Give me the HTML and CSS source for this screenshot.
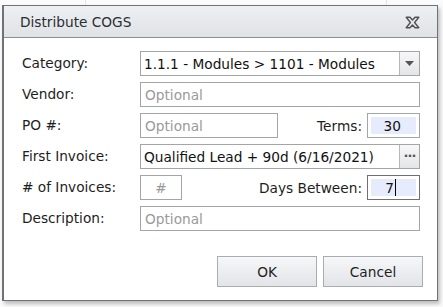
FILE: index.html
```html
<!DOCTYPE html>
<html>
<head>
<meta charset="utf-8">
<link rel="stylesheet" href="styles.css">
</head>
<body>
<div class="backdrop">
  <div class="dialog">
    <div class="header">
      <span class="title">Distribute COGS</span>
      <svg class="close" width="15" height="13" viewBox="0 0 15 13">
        <path d="M1.2 1.2 L5 1.2 L7.5 4 L10 1.2 L13.8 1.2 L9.6 6.5 L13.8 11.8 L10 11.8 L7.5 9 L5 11.8 L1.2 11.8 L5.4 6.5 Z" fill="#e4e6e8" stroke="#4f5256" stroke-width="1.4" stroke-linejoin="round"/>
      </svg>
    </div>
    <div class="body">
      <div class="form">
        <label class="lbl">Category:</label>
        <div class="field combo">
          <span class="combo-text">1.1.1 - Modules &gt; 1101 - Modules</span>
          <span class="combo-btn"><svg width="9" height="5" viewBox="0 0 9 5"><path d="M0 0 H9 L4.5 5 Z" fill="#555"/></svg></span>
        </div>

        <label class="lbl">Vendor:</label>
        <div class="field input"><span class="ph">Optional</span></div>

        <label class="lbl">PO #:</label>
        <div class="split">
          <div class="field input po"><span class="ph">Optional</span></div>
          <span class="sublbl">Terms:</span>
          <div class="field num"><span class="num-fill terms">30</span></div>
        </div>

        <label class="lbl">First Invoice:</label>
        <div class="field combo">
          <span class="combo-text">Qualified Lead + 90d (6/16/2021)</span>
          <span class="combo-btn dots">&middot;&middot;&middot;</span>
        </div>

        <label class="lbl"># of Invoices:</label>
        <div class="split">
          <div class="field input count"><span class="ph">#</span></div>
          <span class="sublbl">Days Between:</span>
          <div class="field num focus"><span class="num-fill days">7<span class="caret"></span></span></div>
        </div>

        <label class="lbl">Description:</label>
        <div class="field input"><span class="ph">Optional</span></div>
      </div>
      <div class="actions">
        <button class="btn">OK</button>
        <button class="btn">Cancel</button>
      </div>
    </div>
  </div>
</div>
</body>
</html>
```
FILE: styles.css
```css
html, body {
  margin: 0;
  padding: 0;
}
body {
  font-family: "DejaVu Sans", Verdana, sans-serif;
  font-size: 13.7px;
  color: #1e1e1e;
  background: #ffffff;
  width: 443px;
  height: 307px;
  overflow: hidden;
}
.backdrop {
  width: 443px;
  height: 307px;
  padding: 5px 0 0 2px;
  box-sizing: border-box;
  background:
    linear-gradient(#e6e6e6, #e6e6e6) 85px 0 / 1px 5px no-repeat,
    linear-gradient(#e6e6e6, #e6e6e6) 386px 0 / 1px 5px no-repeat,
    #fbfbfb;
}
.dialog {
  width: 436px;
  height: 296px;
  box-sizing: border-box;
  border: 1px solid #6f7377;
  border-left-width: 2px;
  background: #fff;
  box-shadow: 2px 3px 4px rgba(0,0,0,0.25);
  display: flex;
  flex-direction: column;
}
.header {
  height: 32px;
  box-sizing: border-box;
  border-bottom: 1px solid #8a8d91;
  background: linear-gradient(#eef0f2, #dfe2e6);
  display: flex;
  align-items: center;
  justify-content: space-between;
  padding: 0 17px 0 16px;
}
.title {
  color: #2a2d33;
  font-size: 13.7px;
  padding-top: 1px;
}
.close {
  display: block;
  margin-top: 1px;
}
.body {
  flex: 1;
  display: flex;
  flex-direction: column;
  padding: 13px 15px 0 17px;
}
.form {
  display: grid;
  grid-template-columns: 119px 280px;
  grid-auto-rows: 25px;
  row-gap: 6px;
  align-items: center;
}
.lbl {
  color: #1e1e1e;
  line-height: 25px;
  padding-left: 1px;
}
.field {
  height: 25px;
  box-sizing: border-box;
  border: 1px solid #a3a6a9;
  background: #fff;
  display: flex;
  align-items: center;
}
.input {
  padding-left: 4px;
}
.ph {
  color: #9a9a9a;
}
.combo {
  padding-left: 3px;
}
.combo-text {
  flex: 1;
  color: #111;
  white-space: nowrap;
  overflow: hidden;
}
.combo-btn {
  width: 20px;
  height: 23px;
  box-sizing: border-box;
  border-left: 1px solid #b6b8bb;
  background: linear-gradient(#f7f7f8, #e3e5e7);
  display: flex;
  align-items: center;
  justify-content: center;
}
.dots {
  color: #555;
  font-size: 13px;
  letter-spacing: -1px;
  font-weight: bold;
  padding-bottom: 3px;
}
.split {
  display: flex;
  align-items: center;
  height: 25px;
}
.po {
  width: 138px;
}
.count {
  width: 42px;
  justify-content: center;
  padding-left: 0;
}
.sublbl {
  margin-left: auto;
  margin-right: 5px;
}
.num {
  width: 53px;
  padding: 3px;
}
.num.focus {
  border-color: #6d7175;
}
.num-fill {
  flex: 1;
  height: 17px;
  background: #e6ecfc;
  display: flex;
  align-items: center;
  justify-content: flex-end;
  color: #111;
}
.terms {
  padding-right: 15px;
}
.days {
  padding-right: 20px;
}
.caret {
  display: inline-block;
  width: 1px;
  height: 17px;
  background: #000;
  margin-left: 1px;
}
.actions {
  display: flex;
  justify-content: flex-end;
  gap: 6px;
  margin-top: 25px;
  margin-right: -1px;
}
.btn {
  width: 100px;
  height: 31px;
  box-sizing: border-box;
  border: 1px solid #a9acb1;
  background: linear-gradient(#f6f7f8, #e2e4e8);
  font-family: "DejaVu Sans", Verdana, sans-serif;
  font-size: 13.7px;
  color: #1e1e1e;
  padding: 0;
}
```
